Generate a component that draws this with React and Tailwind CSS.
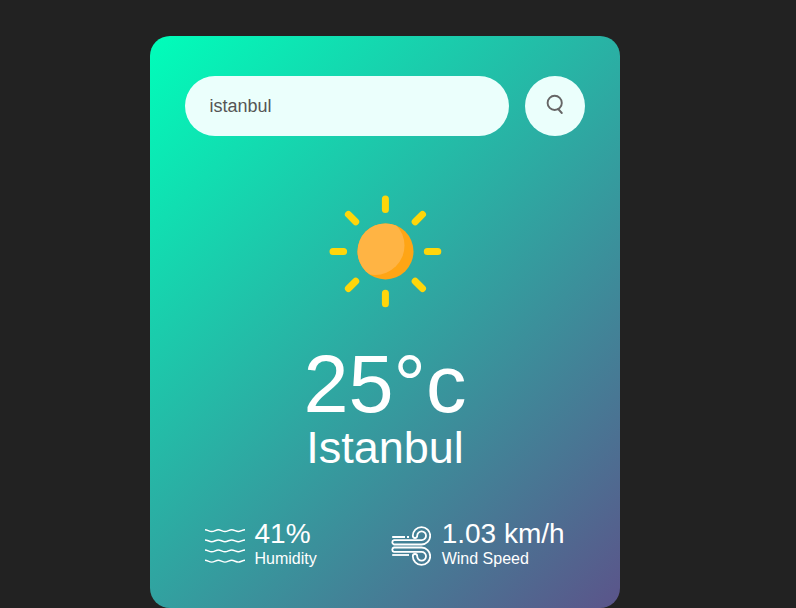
function SearchIcon() {
  return (
    <svg width="20" height="22" viewBox="0 0 20 22" fill="none" stroke="#666" strokeWidth="1.9" strokeLinecap="round" className="-mt-0.5">
      <circle cx="9.7" cy="8.9" r="7.1" />
      <path d="M13.2 15 L16.8 19" />
    </svg>
  );
}

function SunIcon() {
  return (
    <svg width="170" height="170" viewBox="0 0 170 170" className="mt-[30px] block">
      <defs>
        <clipPath id="disc">
          <circle cx="85.5" cy="85.4" r="28" />
        </clipPath>
      </defs>
      <g stroke="#ffd60a" strokeWidth="7" strokeLinecap="round">
        <path d="M85.4 33V43.6M85.4 127.2V137.8M33 85.4H43.6M127.3 85.4H137.8" />
        <path d="M48.4 48.4L55.7 55.7M115.2 55.7L122.5 48.4M48.4 122.5L55.7 115.2M115.2 115.2L122.5 122.5" />
      </g>
      <circle cx="85.5" cy="85.4" r="28" fill="#ffa515" />
      <circle cx="75" cy="79.5" r="29.5" fill="#ffb444" clipPath="url(#disc)" />
    </svg>
  );
}

function HumidityIcon() {
  return (
    <svg width="40" height="40" viewBox="0 0 40 40" fill="none" stroke="#fff" strokeWidth="1.45" className="mt-1.5 mr-[9.5px]">
      {[4.4, 14.6, 24.7, 35].map((y) => (
        <path
          key={y}
          transform={`translate(0 ${y})`}
          d="M0 -.7C2.5 -.7 4 1.1 6.7 1.1S11 -.7 13.3 -.7S17.5 1.1 20 1.1S24.3 -.7 26.7 -.7S31 1.1 33.3 1.1S37.5 -.7 40 -.7"
        />
      ))}
    </svg>
  );
}

function WindIcon() {
  return (
    <svg width="40" height="40" viewBox="0 0 40 40" fill="none" stroke="#fff" strokeWidth="1.8" className="mt-1.5 mr-[10.4px]">
      <path d="M1.2 11H14M16 11H18" />
      <path d="M30.5 18.5H3A2.2 2.2 0 0 1 3 14.2H30.5A4.4 4.4 0 1 0 26.2 9.8A2.1 2.1 0 0 1 21.8 9.8A8.7 8.7 0 1 1 30.5 18.5Z" />
      <path d="M30.5 21.5H3A2.2 2.2 0 0 0 3 25.8H30.5A4.4 4.4 0 1 1 26.2 30.2A2.1 2.1 0 0 0 21.8 30.2A8.7 8.7 0 1 0 30.5 21.5Z" />
      <path d="M1.2 29H18" />
    </svg>
  );
}

export default function App() {
  return (
    <div className="h-[608px] w-full overflow-hidden bg-[#222] pt-9 pl-[150px] font-['Liberation_Sans',Arial,sans-serif]">
      <main className="h-[572px] w-[470px] rounded-[20px] bg-[linear-gradient(135deg,#00feba,#5b548a)] px-[35px] pt-10 text-white">
        <div className="flex items-center justify-between">
          <input
            defaultValue="istanbul"
            aria-label="City"
            className="h-[60px] w-[324px] rounded-[30px] bg-[#ebfffc] px-[24.5px] text-[18px] text-[#555] outline-none"
          />
          <button aria-label="Search" className="flex size-[60px] items-center justify-center rounded-full bg-[#ebfffc]">
            <SearchIcon />
          </button>
        </div>
        <section className="flex flex-col items-center">
          <SunIcon />
          <h1 className="mt-[10px] text-[81px] leading-[76px]">25°c</h1>
          <h2 className="text-[45px] leading-[52px]">Istanbul</h2>
        </section>
        <div className="mt-[44px] flex items-center justify-between pr-[20.4px] pl-5">
          <div className="flex items-center">
            <HumidityIcon />
            <div>
              <p className="text-[28px] leading-8">41%</p>
              <p className="text-[16px] leading-[18px]">Humidity</p>
            </div>
          </div>
          <div className="flex items-center">
            <WindIcon />
            <div>
              <p className="text-[28px] leading-8">1.03 km/h</p>
              <p className="text-[16px] leading-[18px]">Wind Speed</p>
            </div>
          </div>
        </div>
      </main>
    </div>
  );
}
